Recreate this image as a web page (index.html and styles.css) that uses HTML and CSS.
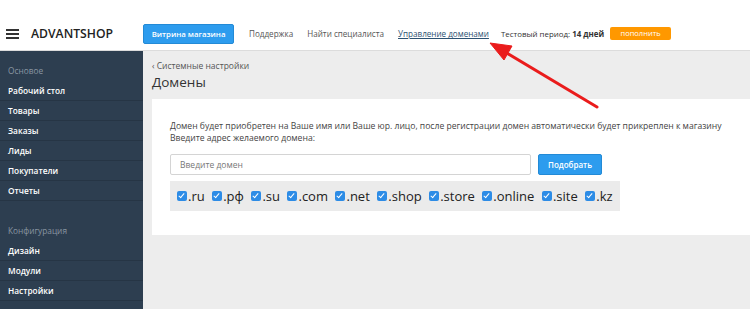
FILE: index.html
```html
<!DOCTYPE html>
<html lang="ru">
<head>
<meta charset="UTF-8">
<title>Домены</title>
<link rel="stylesheet" href="styles.css">
</head>
<body>
<header class="topbar">
  <div class="burger"><span></span><span></span><span></span></div>
  <div class="logo">ADVANTSHOP</div>
  <a class="btn-store" href="#">Витрина магазина</a>
  <nav class="top-links">
    <a href="#">Поддержка</a>
    <a href="#">Найти специалиста</a>
    <a href="#" class="current">Управление доменами</a>
  </nav>
  <div class="trial">Тестовый период: <b>14 дней</b></div>
  <a class="btn-pay" href="#">пополнить</a>
</header>

<div class="layout">
  <aside class="sidebar">
    <div class="group">
      <div class="group-title">Основое</div>
      <a class="side-item" href="#">Рабочий стол</a>
      <a class="side-item" href="#">Товары</a>
      <a class="side-item" href="#">Заказы</a>
      <a class="side-item" href="#">Лиды</a>
      <a class="side-item" href="#">Покупатели</a>
      <a class="side-item" href="#">Отчеты</a>
    </div>
    <div class="group">
      <div class="group-title">Конфигурация</div>
      <a class="side-item" href="#">Дизайн</a>
      <a class="side-item" href="#">Модули</a>
      <a class="side-item" href="#">Настройки</a>
    </div>
  </aside>

  <main class="content">
    <a class="back" href="#">&lsaquo; Системные настройки</a>
    <h1>Домены</h1>

    <div class="card">
      <p class="hint">Домен будет приобретен на Ваше имя или Ваше юр. лицо, после регистрации домен автоматически будет прикреплен к магазину<br>Введите адрес желаемого домена:</p>
      <div class="search">
        <input type="text" placeholder="Введите домен">
        <button type="button">Подобрать</button>
      </div>
      <div class="zones">
        <label><span class="check"></span>.ru</label>
        <label><span class="check"></span>.рф</label>
        <label><span class="check"></span>.su</label>
        <label><span class="check"></span>.com</label>
        <label><span class="check"></span>.net</label>
        <label><span class="check"></span>.shop</label>
        <label><span class="check"></span>.store</label>
        <label><span class="check"></span>.online</label>
        <label><span class="check"></span>.site</label>
        <label><span class="check"></span>.kz</label>
      </div>
    </div>
  </main>
</div>

<!-- annotation arrow drawn over the screenshot -->
<svg class="arrow" width="750" height="309" viewBox="0 0 750 309">
  <g fill="#ea1c1c" stroke="#ea1c1c">
    <line x1="597" y1="107" x2="505" y2="52" stroke-width="3" stroke-linecap="round"/>
    <polygon points="490,43 512,46 504,60" stroke-width="1" stroke-linejoin="round"/>
  </g>
</svg>
</body>
</html>
```

FILE: styles.css
```css
body {
  margin: 0;
  font-family: 'Open Sans', sans-serif;
  color: #333;
  background: #ededed;
  height: 309px;
  overflow: hidden;
}
a {
  text-decoration: none;
  color: inherit;
}

/* top bar */
.topbar {
  height: 51px;
  box-sizing: border-box;
  padding-top: 17px;
  display: flex;
  align-items: center;
  background: white;
  border-bottom: 1px solid #dcdcdc;
}
.burger {
  width: 13px;
  margin-left: 6px;
  display: flex;
  flex-direction: column;
  gap: 2px;
}
.burger span {
  height: 2px;
  background: #333;
}
.logo {
  margin-left: 12px;
  font-size: 12.2px;
  font-weight: 600;
  color: #222;
}
.btn-store {
  margin-left: 30px;
  width: 89px;
  height: 18px;
  line-height: 18px;
  text-align: center;
  background: #2d9cee;
  border: 1px solid #238ad6;
  border-radius: 2px;
  color: white;
  font-size: 7.8px;
  font-weight: 600;
}
.top-links {
  display: flex;
  gap: 14px;
  margin-left: 15px;
  font-size: 8.1px;
  color: #555;
}
.top-links .current {
  color: #2c5272;
  text-decoration: underline;
}
.trial {
  margin-left: 12px;
  font-size: 7.9px;
  color: #333;
}
.btn-pay {
  margin-left: 6px;
  width: 61px;
  height: 13px;
  line-height: 13px;
  text-align: center;
  background: #ff9800;
  border-radius: 2px;
  color: white;
  font-size: 7.5px;
}

/* page */
.layout {
  display: flex;
  height: 258px;
}
.sidebar {
  width: 143px;
  flex-shrink: 0;
  background: #2d3e50;
  padding-top: 10px;
  box-sizing: border-box;
}
.group + .group {
  margin-top: 20px;
}
.group-title,
.side-item {
  display: block;
  height: 20px;
  line-height: 20px;
  padding-left: 8px;
  font-size: 8.3px;
}
.group-title {
  color: #8a96a2;
}
.side-item {
  color: white;
  font-weight: 600;
  border-bottom: 1px solid #263545;
  box-sizing: border-box;
}
.content {
  flex: 1;
  padding: 9px 0 0 9px;
  min-width: 0;
}
.back {
  display: block;
  font-size: 8.5px;
  color: #555;
  line-height: 12px;
}
h1 {
  margin: 0;
  font-size: 13.5px;
  font-weight: 400;
  line-height: 20px;
  color: #333;
}
.card {
  margin-top: 7px;
  background: white;
  padding: 21px 18px 22px;
  box-sizing: border-box;
  height: 136px;
}
.hint {
  margin: 0;
  font-size: 8.6px;
  line-height: 12px;
  color: #444;
  white-space: nowrap;
}
.search {
  display: flex;
  gap: 7px;
  margin-top: 10px;
}
.search input {
  width: 361px;
  height: 21px;
  box-sizing: border-box;
  border: 1px solid #d4d4d4;
  border-radius: 2px;
  padding: 0 9px;
  font-family: inherit;
  font-size: 8.5px;
}
.search input::placeholder {
  color: #777;
}
.search button {
  width: 64px;
  height: 21px;
  background: #2d9cee;
  border: 1px solid #238ad6;
  border-radius: 2px;
  color: white;
  font-family: inherit;
  font-size: 8px;
  font-weight: 600;
}
.zones {
  display: inline-flex;
  gap: 7.5px;
  margin-top: 6px;
  height: 30px;
  align-items: center;
  padding: 0 7px;
  background: #ebebeb;
  font-size: 13px;
  color: #222;
}
.zones label {
  display: flex;
  align-items: center;
}
.check {
  width: 10px;
  height: 10px;
  border-radius: 2px;
  background: #2d8ce6;
  position: relative;
  margin-right: 1px;
}
.check::after {
  content: '';
  position: absolute;
  left: 3px;
  top: 1px;
  width: 2px;
  height: 5px;
  border: solid white;
  border-width: 0 1.5px 1.5px 0;
  transform: rotate(40deg);
}

/* arrow overlay */
.arrow {
  position: absolute;
  top: 0;
  left: 0;
  pointer-events: none;
}
```
